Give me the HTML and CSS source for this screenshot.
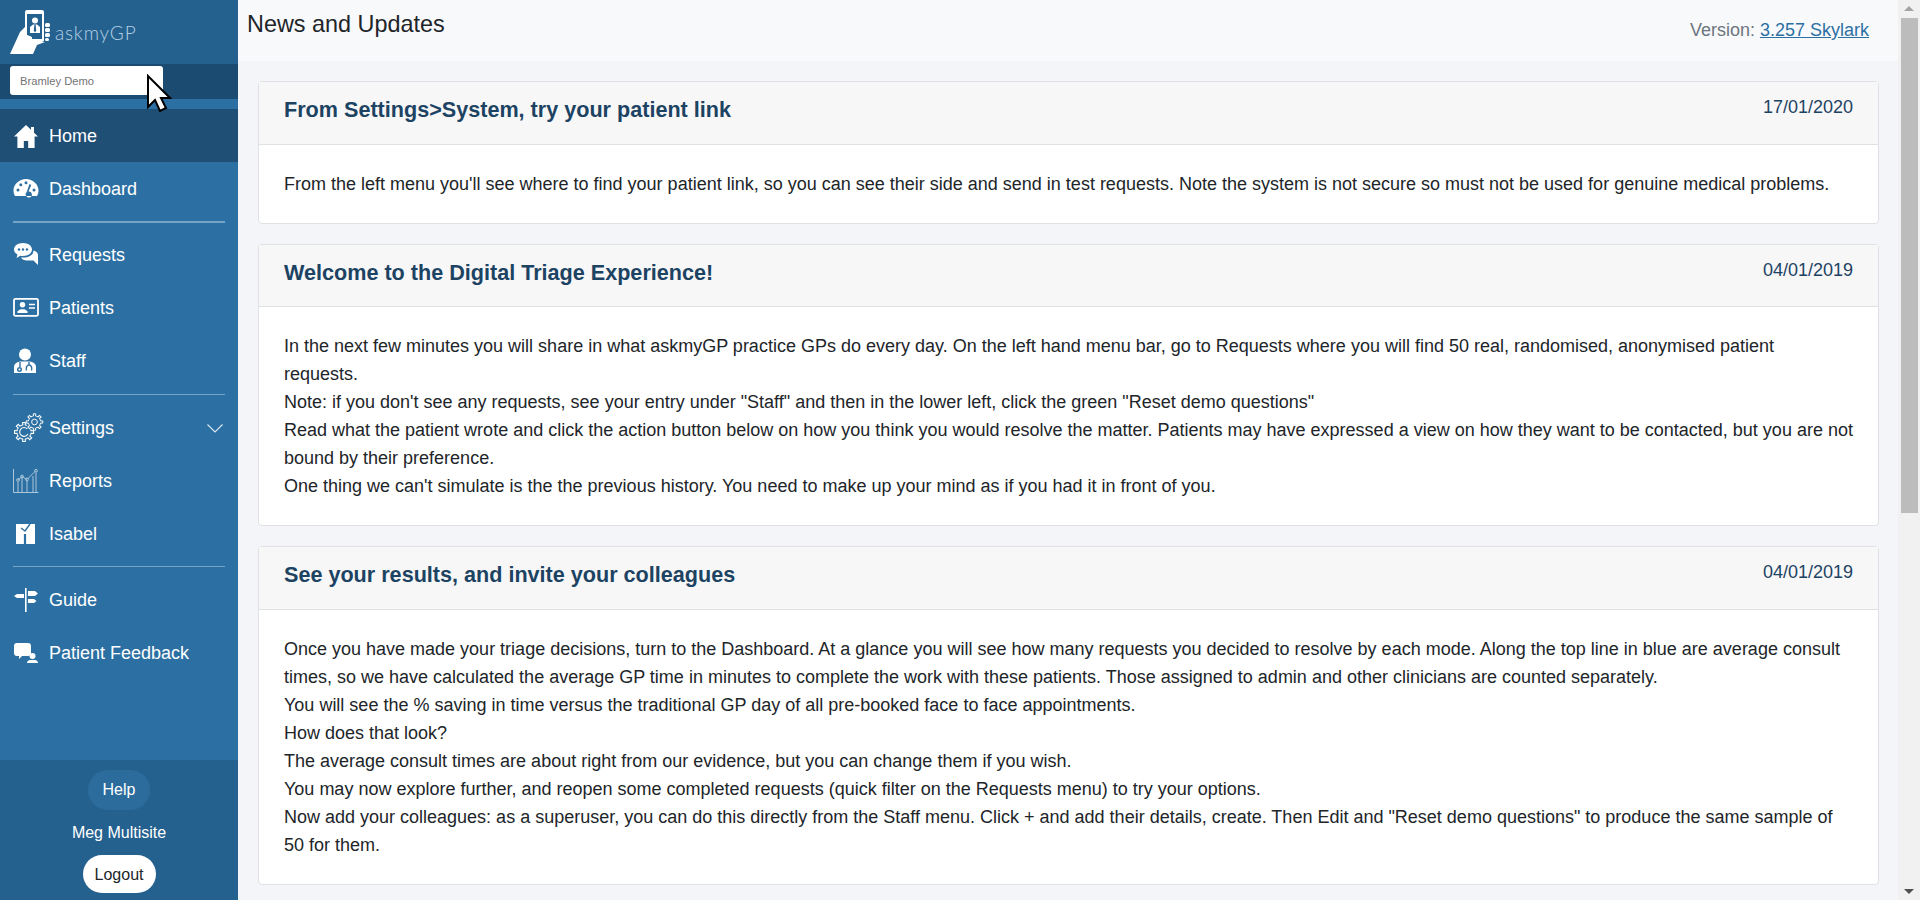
FILE: index.html
```html
<!DOCTYPE html>
<html lang="en">
<head>
  <meta charset="UTF-8">
  <title>askmyGP - News and Updates</title>
  <link rel="stylesheet" href="styles.css">
</head>
<body>
  <div class="app">
    <aside class="sidebar">
      <div class="logo">
        <svg class="logo-mark" width="42" height="48" viewBox="0 0 42 48">
          <path fill="#fff" d="M18 2h15a2 2 0 0 1 2 2v28a2 2 0 0 1-2 2H18a2 2 0 0 1-2-2V4a2 2 0 0 1 2-2z"/>
          <rect x="18" y="6" width="15" height="25" fill="#25618f"/>
          <path fill="#fff" d="M1 46L11 24l5-5v15h20l-8 3-4 9z"/>
          <path fill="#fff" d="M16 26l7 3v5h-7z"/>
          <rect x="36" y="15" width="5" height="4" rx="1.500" fill="#fff"/>
          <rect x="36" y="20" width="5" height="4" rx="1.500" fill="#fff"/>
          <rect x="36" y="25" width="5" height="4" rx="1.500" fill="#fff"/>
          <rect x="36" y="30" width="4" height="3" rx="1.500" fill="#fff"/>
          <circle cx="26" cy="12.500" r="3" fill="#fff"/>
          <path fill="#fff" d="M21 25v-6l3-2.500h4l3 2.500v6z"/>
          <path fill="#25618f" d="M25.400 16.500h1.200l.6 6-1.200 2-1.200-2z"/>
        </svg>
        <span class="logo-text">askmyGP</span>
      </div>
      <div class="site-picker">
        <div class="site-input">Bramley Demo</div>
      </div>
      <nav class="nav">
        <a class="nav-item active" href="#">
          <svg class="nav-icon" viewBox="0 0 26 26"><path fill="#fff" d="M13 2L1 13.500h3.400V25h6.400v-7h4.400v7h6.400V13.500H25l-4-3.800V4h-3v2.800z"/></svg>
          <span>Home</span>
        </a>
        <a class="nav-item" href="#">
          <svg class="nav-icon" viewBox="0 0 26 26"><path fill="#fff" fill-rule="evenodd" d="M13 3C6.400 3 .5 8.200.5 14.600c0 2 .6 3.900 1.500 5.400h22c.9-1.500 1.500-3.400 1.500-5.400C25.500 8.200 19.600 3 13 3zM5 15.500a1.500 1.500 0 1 1 0-3 1.500 1.500 0 0 1 0 3zm2.800-5.200a1.500 1.500 0 1 1 0-3 1.500 1.500 0 0 1 0 3zM13 8.200a1.500 1.500 0 1 1 0-3 1.500 1.500 0 0 1 0 3zm8 7.300a1.500 1.500 0 1 1 0-3 1.500 1.500 0 0 1 0 3zM16.500 8l1.800.9-2.800 6.600a3 3 0 1 1-2.200 4.500 3 3 0 0 1 .4-4z"/></svg>
          <span>Dashboard</span>
        </a>
        <hr class="nav-line nav-line-first">
        <a class="nav-item" href="#">
          <svg class="nav-icon" viewBox="0 0 26 26"><path fill="#fff" d="M10 1c5 0 9 2.800 9 6.500S15 14 10 14c-1 0-1.800-.1-2.700-.3L3.500 16l1-3.400C2.400 11.400 1 9.600 1 7.500 1 3.800 5 1 10 1z"/><path fill="#fff" d="M20.500 8.500c2.800.6 4.500 2.300 4.500 4.500v10l-4.500-4.500H14c-3 0-5-1-6-3 6 .6 12.500-1.500 12.500-7z"/><circle cx="6" cy="7.500" r="1.200" fill="#2c70a3"/><circle cx="10" cy="7.500" r="1.200" fill="#2c70a3"/><circle cx="14" cy="7.500" r="1.200" fill="#2c70a3"/></svg>
          <span>Requests</span>
        </a>
        <a class="nav-item" href="#">
          <svg class="nav-icon" viewBox="0 0 26 26"><rect x="1" y="3.800" width="24" height="17" rx="1.500" fill="none" stroke="#fff" stroke-width="1.800"/><circle cx="9.500" cy="9.800" r="2.700" fill="#fff"/><path fill="#fff" d="M4.500 18v-1.800l3-2h4l3 2V18z"/><path stroke="#fff" stroke-width="1.500" d="M16 9.500h6M16 13h6"/></svg>
          <span>Patients</span>
        </a>
        <a class="nav-item" href="#">
          <svg class="nav-icon" viewBox="0 0 26 26"><circle cx="12" cy="6.500" r="6" fill="#fff"/><path fill="#fff" d="M1 25v-6c0-3 2-4.500 6-5.500h10c4 1 6 2.500 6 5.500v6z"/><g fill="none" stroke="#2c70a3" stroke-width="1.400"><circle cx="6.500" cy="21.500" r="1.800"/><path d="M7 19v-5M16 14v2.500M13.500 22.500c-1-3 .5-5.500 2.500-5.500s3.500 2.500 2.500 5.500"/></g></svg>
          <span>Staff</span>
        </a>
        <hr class="nav-line">
        <a class="nav-item" href="#">
          <svg class="nav-icon nav-icon-wide" viewBox="0 0 30 30">
            <defs>
              <path id="tooth" fill="none" stroke="#fff" stroke-width="1" d="M-2.490-6L-1.130-6.400-1.200-8.700 1.200-8.700 1.130-6.400 2.490-6"/>
            </defs>
            <g transform="translate(10 19) scale(1.100)">
              <use href="#tooth" transform="rotate(90)"/>
              <use href="#tooth" transform="rotate(135)"/>
              <use href="#tooth" transform="rotate(180)"/>
              <use href="#tooth" transform="rotate(225)"/>
              <use href="#tooth" transform="rotate(270)"/>
              <use href="#tooth" transform="rotate(315)"/>
              <use href="#tooth"/>
              <path fill="none" stroke="#fff" stroke-width="1" d="M3 -2.800A4 4 0 1 0 3.600 1.800"/>
            </g>
            <g transform="translate(20.500 9) scale(.95)">
              <use href="#tooth"/>
              <use href="#tooth" transform="rotate(45)"/>
              <use href="#tooth" transform="rotate(90)"/>
              <use href="#tooth" transform="rotate(135)"/>
              <use href="#tooth" transform="rotate(180)"/>
              <use href="#tooth" transform="rotate(225)"/>
              <use href="#tooth" transform="rotate(270)"/>
              <use href="#tooth" transform="rotate(315)"/>
              <circle r="3" fill="none" stroke="#fff" stroke-width="1"/>
            </g>
          </svg>
          <span>Settings</span>
          <svg class="nav-chevron" width="16" height="9" viewBox="0 0 16 9"><path fill="none" stroke="#dce9f3" stroke-width="1.100" d="M.5.5L8 8l7.500-7.500"/></svg>
        </a>
        <a class="nav-item" href="#">
          <svg class="nav-icon nav-icon-dim" viewBox="0 0 26 26"><g fill="none" stroke="#fff" stroke-width="1"><path d="M.5 1v23.500h25"/><path d="M5 12l4-3.500 5 3 9-9"/><circle cx="5" cy="12" r="1.400"/><circle cx="9" cy="8.500" r="1.400"/><circle cx="14" cy="11.500" r="1.400"/><circle cx="23" cy="2.800" r="1.400"/><path d="M5 14v10M9 10v14M14 13v11M20 8v16M23 5v19"/></g></svg>
          <span>Reports</span>
        </a>
        <a class="nav-item" href="#">
          <svg class="nav-icon" viewBox="0 0 26 26"><rect x="3" y="3" width="19" height="20" fill="#fff"/><path fill="none" stroke="#2c70a3" stroke-width="1.400" d="M8 7l4 3 5-7"/><path stroke="#2c70a3" stroke-width="2.200" d="M12 13v10"/></svg>
          <span>Isabel</span>
        </a>
        <hr class="nav-line nav-line-last">
        <a class="nav-item" href="#">
          <svg class="nav-icon" viewBox="0 0 26 26"><path fill="#fff" d="M12 1h1.600v24H12zM15 4h7l3 2.500L22 9h-7zM11 7v4H4L1 9l3-2zM15 12h6l2.500 2-2.500 2h-6z"/></svg>
          <span>Guide</span>
        </a>
        <a class="nav-item" href="#">
          <svg class="nav-icon" viewBox="0 0 26 26"><path fill="#fff" d="M4 3h11a3 3 0 0 1 3 3v7a3 3 0 0 1-3 3H9l-3 3v-3H4a3 3 0 0 1-3-3V6a3 3 0 0 1 3-3z"/><circle cx="19.500" cy="16" r="3" fill="#fff"/><path fill="#fff" d="M14 23v-.5a3 3 0 0 1 3-2.500h5a3 3 0 0 1 3 2.500v.5z"/></svg>
          <span>Patient Feedback</span>
        </a>
      </nav>
      <div class="side-foot">
        <a class="btn-help" href="#">Help</a>
        <div class="user-name">Meg Multisite</div>
        <a class="btn-logout" href="#">Logout</a>
      </div>
    </aside>

    <main class="main">
      <div class="topbar">
        <h1 class="page-title">News and Updates</h1>
        <div class="version">Version: <a href="#">3.257 Skylark</a></div>
      </div>
      <div class="news">
        <section class="card">
          <div class="card-head">
            <h2>From Settings&gt;System, try your patient link</h2>
            <span class="card-date">17/01/2020</span>
          </div>
          <div class="card-body">
            <p>From the left menu you'll see where to find your patient link, so you can see their side and send in test requests. Note the system is not secure so must not be used for genuine medical problems.</p>
          </div>
        </section>
        <section class="card">
          <div class="card-head">
            <h2>Welcome to the Digital Triage Experience!</h2>
            <span class="card-date">04/01/2019</span>
          </div>
          <div class="card-body">
            <p>In the next few minutes you will share in what askmyGP practice GPs do every day. On the left hand menu bar, go to Requests where you will find 50 real, randomised, anonymised patient requests.</p>
            <p>Note: if you don't see any requests, see your entry under "Staff" and then in the lower left, click the green "Reset demo questions"</p>
            <p>Read what the patient wrote and click the action button below on how you think you would resolve the matter. Patients may have expressed a view on how they want to be contacted, but you are not bound by their preference.</p>
            <p>One thing we can't simulate is the the previous history. You need to make up your mind as if you had it in front of you.</p>
          </div>
        </section>
        <section class="card">
          <div class="card-head">
            <h2>See your results, and invite your colleagues</h2>
            <span class="card-date">04/01/2019</span>
          </div>
          <div class="card-body">
            <p>Once you have made your triage decisions, turn to the Dashboard. At a glance you will see how many requests you decided to resolve by each mode. Along the top line in blue are average consult times, so we have calculated the average GP time in minutes to complete the work with these patients. Those assigned to admin and other clinicians are counted separately.</p>
            <p>You will see the % saving in time versus the traditional GP day of all pre-booked face to face appointments.</p>
            <p>How does that look?</p>
            <p>The average consult times are about right from our evidence, but you can change them if you wish.</p>
            <p>You may now explore further, and reopen some completed requests (quick filter on the Requests menu) to try your options.</p>
            <p>Now add your colleagues: as a superuser, you can do this directly from the Staff menu. Click + and add their details, create. Then Edit and "Reset demo questions" to produce the same sample of 50 for them.</p>
          </div>
        </section>
      </div>
    </main>

    <div class="scrollbar">
      <div class="scroll-arrow"><svg width="10" height="5" viewBox="0 0 10 5"><path fill="#a3a3a3" d="M5 0l5 5H0z"/></svg></div>
      <div class="scroll-track"><div class="scroll-thumb"></div></div>
      <div class="scroll-arrow"><svg width="10" height="5" viewBox="0 0 10 5"><path fill="#505050" d="M0 0h10L5 5z"/></svg></div>
    </div>
  </div>

  <svg class="cursor" width="26" height="40" viewBox="0 0 26 40"><path fill="#fff" stroke="#000" stroke-width="2" d="M2 2v31l7-7 5 11 6-3-5-10h9z"/></svg>
</body>
</html>
```

FILE: styles.css
```css
html, body {
  margin: 0;
  padding: 0;
  height: 100%;
  overflow: hidden;
}
body {
  font-family: "Liberation Sans", Arial, sans-serif;
  font-size: 18px;
  color: #212529;
  background-color: #f3f5f9;
}
a {
  text-decoration: none;
}
.app {
  display: flex;
  height: 900px;
}

/* sidebar */
.sidebar {
  width: 238px;
  flex-shrink: 0;
  display: flex;
  flex-direction: column;
  background-color: #2c70a3;
}
.logo {
  height: 64px;
  flex-shrink: 0;
  box-sizing: border-box;
  padding-left: 9px;
  display: flex;
  align-items: center;
  background-color: #25618f;
}
.logo-mark {
  flex-shrink: 0;
  margin-right: 4px;
}
.logo-text {
  font-family: "Lato", sans-serif;
  font-weight: 300;
  font-size: 19px;
  letter-spacing: .8px;
  color: #b4cfe3;
}
.site-picker {
  height: 35px;
  box-sizing: border-box;
  padding-left: 10px;
  padding-top: 2px;
  background-color: #1b4b70;
}
.site-input {
  width: 153px;
  height: 29px;
  box-sizing: border-box;
  padding-left: 10px;
  line-height: 30px;
  font-size: 11.2px;
  color: #737373;
  background-color: #fff;
  border-radius: 3px;
}
.nav {
  flex: 1;
  padding-top: 10px;
}
.nav-item {
  display: flex;
  align-items: center;
  height: 53px;
  box-sizing: border-box;
  padding: 1px 13px 0 13px;
  color: #fff;
  font-size: 18px;
}
.nav-item.active {
  background-color: #1f4f75;
}
.nav-icon {
  width: 26px;
  height: 26px;
  margin-right: 10px;
  flex-shrink: 0;
}
.nav-icon-wide {
  width: 30px;
  height: 30px;
  margin-left: 1px;
  margin-right: 5px;
}
.nav-icon-dim {
  opacity: .6;
}
.nav-chevron {
  margin-left: auto;
  margin-right: 2px;
}
.nav-line {
  margin: 7px 13px 6px 13px;
  border: 0;
  border-top: 1px solid #74a5c9;
}
.nav-line-first {
  margin: 6px 13px 5px 13px;
  border-top-width: 2px;
}
.nav-line-last {
  margin: 6px 13px 6px 13px;
}
.side-foot {
  height: 140px;
  flex-shrink: 0;
  display: flex;
  flex-direction: column;
  align-items: center;
  background-color: #25618f;
}
.btn-help {
  margin-top: 10px;
  width: 62px;
  height: 40px;
  line-height: 40px;
  text-align: center;
  font-size: 16px;
  color: #fff;
  background-color: #2c6c9d;
  border-radius: 20px;
}
.user-name {
  margin-top: 12px;
  line-height: 22px;
  font-size: 16px;
  color: #fff;
}
.btn-logout {
  margin-top: 11px;
  width: 73px;
  height: 38px;
  line-height: 39px;
  text-align: center;
  font-size: 16px;
  color: #212529;
  background-color: #fff;
  border-radius: 19px;
}

/* main column */
.main {
  flex: 1;
  min-width: 0;
  overflow: hidden;
}
.topbar {
  height: 61px;
  box-sizing: border-box;
  display: flex;
  justify-content: space-between;
  padding: 10px 29px 0 9px;
  background-color: #f8f9fb;
}
.page-title {
  margin: 0;
  font-size: 23.4px;
  font-weight: 400;
  line-height: 29px;
  color: #212529;
}
.version {
  margin-top: 10px;
  font-size: 18px;
  color: #6c757d;
}
.version a {
  color: #2c70a3;
  text-decoration: underline;
}
.news {
  padding: 20px 19px 0 20px;
}
.card {
  margin-bottom: 20px;
  background-color: #fff;
  border: 1px solid #dfe1e4;
  border-radius: 4px;
}
.card-head {
  height: 62.5px;
  box-sizing: border-box;
  display: flex;
  justify-content: space-between;
  padding: 14px 25px 0 25px;
  background-color: #f7f7f8;
  border-bottom: 1px solid #dfe1e4;
}
.card-head h2 {
  margin: 0;
  font-size: 21.6px;
  line-height: 28px;
  font-weight: 700;
  color: #1d4363;
}
.card-date {
  line-height: 22px;
  font-size: 18px;
  color: #1d4363;
}
.card-body {
  padding: 25px 25px 25px 25px;
}
.card-body p {
  margin: 0;
  font-size: 18px;
  line-height: 28px;
}

/* scrollbar column, drawn because the shot has one */
.scrollbar {
  width: 22px;
  flex-shrink: 0;
  display: flex;
  flex-direction: column;
  background-color: #f1f1f1;
}
.scroll-arrow {
  height: 17px;
  display: flex;
  align-items: center;
  justify-content: center;
}
.scroll-track {
  flex: 1;
  padding: 1px 2px 0 3px;
}
.scroll-thumb {
  height: 495px;
  background-color: #bcbcbc;
}

/* mouse pointer lying over the sidebar */
.cursor {
  position: absolute;
  left: 146px;
  top: 74px;
}
```
